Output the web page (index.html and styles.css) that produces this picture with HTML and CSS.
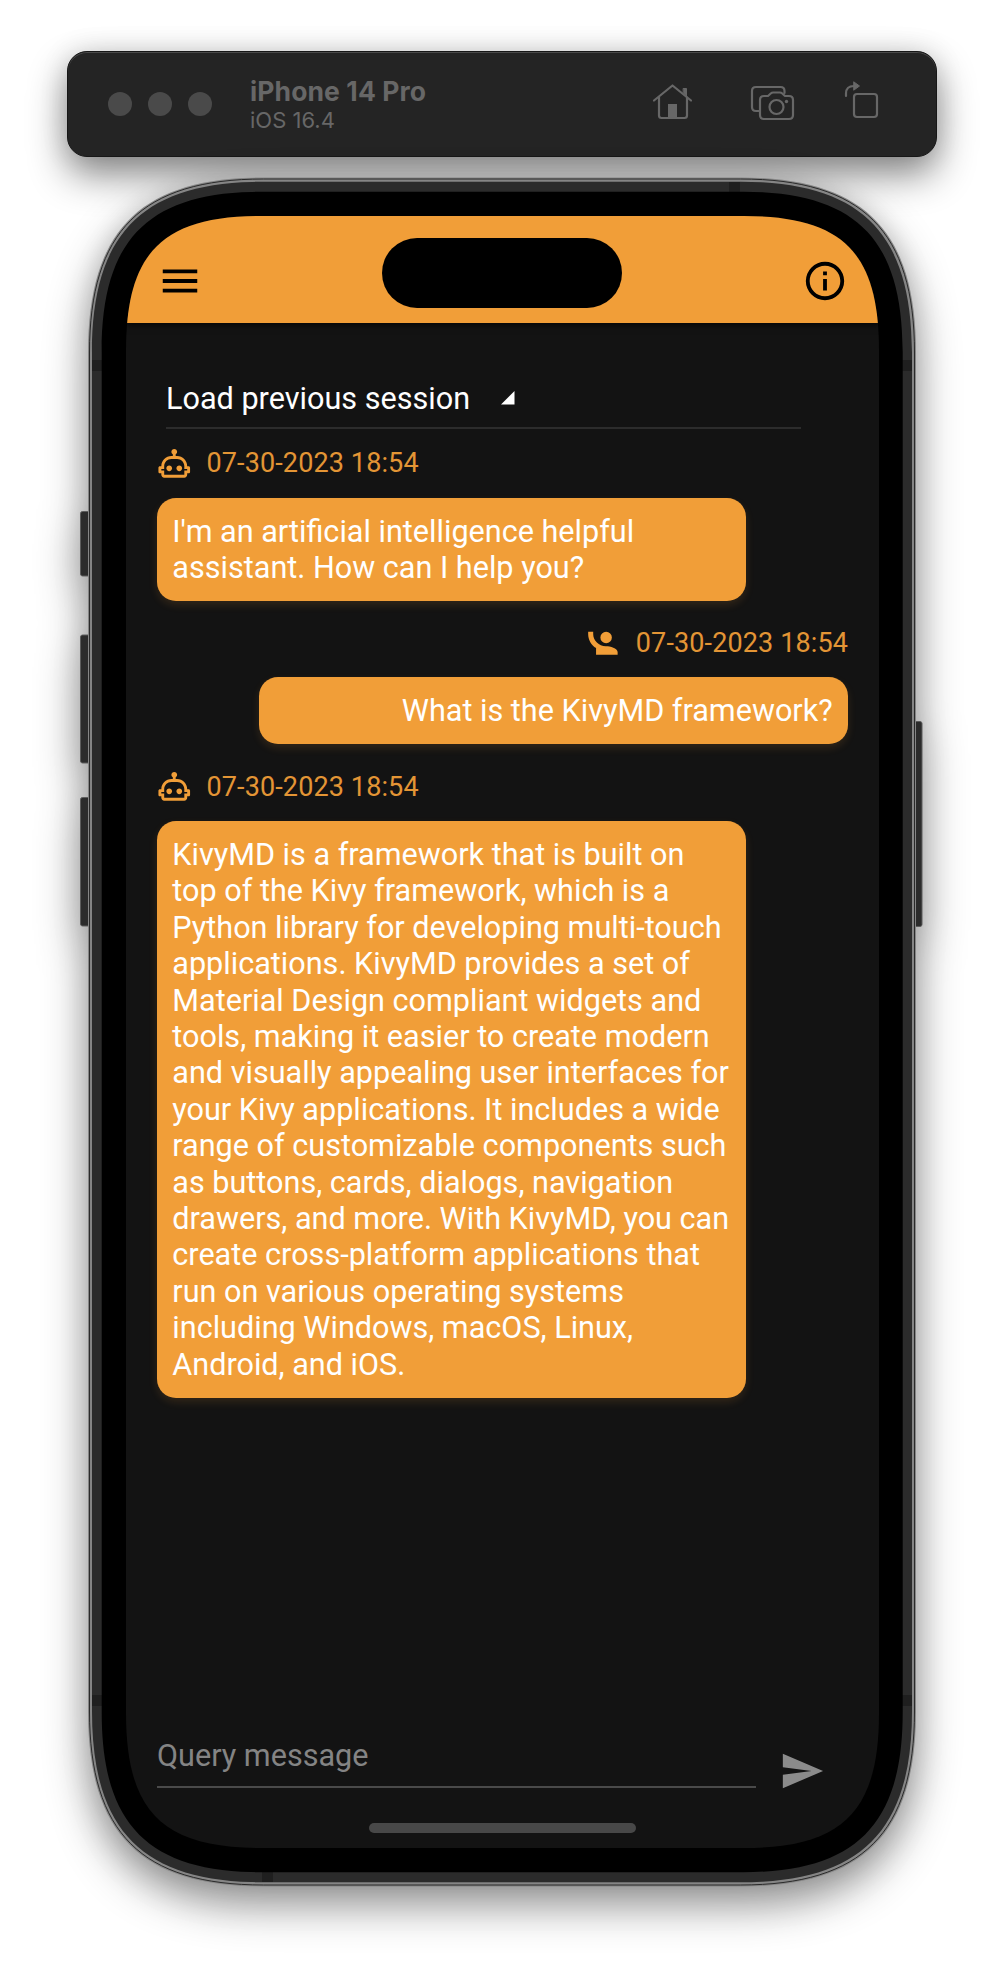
FILE: index.html
```html
<!DOCTYPE html>
<html lang="en">
<head>
<meta charset="utf-8">
<title>iPhone 14 Pro</title>
<link rel="stylesheet" href="styles.css">
</head>
<body>
<div class="toolbar">
  <div class="lights"><i></i><i></i><i></i></div>
  <div class="device">
    <div class="device-name">iPhone 14 Pro</div>
    <div class="device-os">iOS 16.4</div>
  </div>
  <svg class="tools" width="240" height="50" viewBox="640 79 240 50" fill="none" stroke="#676767" stroke-width="2.200" stroke-linejoin="round" stroke-linecap="round">
    <path d="M655 100.500L673.500 85.500L692 100.500M660 97V115.500Q660 118 662.500 118H685.500Q688 118 688 115.500V97"/>
    <path d="M684.500 88.500H687.500V96L684.500 93Z" fill="#676767" stroke-width="1"/>
    <path d="M669 104H678V118H669Z" fill="#676767" stroke="none"/>
    <path d="M760 111H757Q753 111 753 107V91Q753 87 757 87H781.500Q785.500 87 785.500 91V93"/>
    <path d="M765 96H769L772 93.300Q772.800 92.500 774 92.500H781Q782.200 92.500 783 93.300L786 96H790Q794 96 794 100V115Q794 119 790 119H765Q761 119 761 115V100Q761 96 765 96Z"/>
    <circle cx="777.500" cy="107" r="7"/>
    <circle cx="787.500" cy="101.500" r="1.700" fill="#676767" stroke="none"/>
    <rect x="855" y="94" width="23" height="23" rx="3"/>
    <path d="M847 96V93.500Q847 86 855 86"/>
    <path d="M855 82L860.500 86L855 90Z" fill="#676767" stroke-width="1"/>
  </svg>
</div>

<div class="phone">
  <svg class="frame" width="844" height="1710" viewBox="80 177 844 1710">
    <g fill="#2b2b2b" stroke="#5c5c5c">
      <rect x="80.500" y="511.500" width="12" height="64.500" rx="2"/>
      <rect x="80.500" y="635" width="12" height="128" rx="2"/>
      <rect x="80.500" y="797.500" width="12" height="128.500" rx="2"/>
      <rect x="911" y="721.500" width="11" height="205" rx="2"/>
    </g>
    <path fill="#858585" d="M263 177.500h478c122.300 0 175 52.700 175 175v1359c0 122.300-52.700 175-175 175h-478c-122.300 0-175-52.700-175-175v-1359c0-122.300 52.700-175 175-175z"/>
    <path fill="none" stroke="#2a2a2a" d="M263.500 179h477c122 0 174 52 174 174v1358c0 122-52 174-174 174h-477c-122 0-174-52-174-174v-1358c0-122 52-174 174-174z"/>
    <path fill="#2b2b2b" d="M263 181.800h478c120 0 171 51 171 171v1358.500c0 120-51 171-171 171h-478c-120 0-171-51-171-171v-1358.500c0-120 51-171 171-171z"/>
    <g fill="#1f1f1f">
      <rect x="92" y="360" width="11" height="11"/>
      <rect x="901" y="360" width="11" height="11"/>
      <rect x="92" y="1695" width="11" height="11"/>
      <rect x="901" y="1695" width="11" height="11"/>
      <rect x="729" y="182" width="11" height="11"/>
      <rect x="262" y="1871" width="11" height="11"/>
    </g>
    <path fill="#000" d="M261.700 191.800h481c113 0 160 47 160 160v1360.500c0 113-47 160-160 160h-481c-113 0-160-47-160-160v-1360.500c0-113 47-160 160-160z"/>
  </svg>

  <div class="screen">
    <header class="appbar">
      <svg class="icon" viewBox="0 0 24 24"><path d="M3 6H21V8H3V6M3 11H21V13H3V11M3 16H21V18H3V16Z"/></svg>
      <div class="island"></div>
      <svg class="icon" viewBox="0 0 24 24"><path d="M11 9H13V7H11M12 20C7.590 20 4 16.410 4 12S7.590 4 12 4 20 7.590 20 12 16.410 20 12 20M12 2A10 10 0 0 0 2 12A10 10 0 0 0 12 22A10 10 0 0 0 22 12A10 10 0 0 0 12 2M11 17H13V11H11V17Z"/></svg>
    </header>

    <main class="chat">
      <div class="session">
        <span>Load previous session</span>
        <svg width="14" height="14" viewBox="0 0 14 14"><path fill="#fff" d="M0 13.500L13.500 0V13.500Z"/></svg>
      </div>

      <div class="meta">
        <svg class="avatar" viewBox="0 0 24 24"><path d="M17.500 15.500C17.500 16.610 16.610 17.500 15.500 17.500S13.500 16.610 13.500 15.500 14.400 13.500 15.500 13.500 17.500 14.400 17.500 15.500M8.500 13.500C7.400 13.500 6.500 14.400 6.500 15.500S7.400 17.500 8.500 17.500 10.500 16.610 10.500 15.500 9.610 13.500 8.500 13.500M23 15V18C23 18.550 22.550 19 22 19H21V20C21 21.110 20.110 22 19 22H5C3.900 22 3 21.110 3 20V19H2C1.450 19 1 18.550 1 18V15C1 14.450 1.450 14 2 14H3C3 10.130 6.130 7 10 7H11V5.730C10.400 5.390 10 4.740 10 4C10 2.900 10.900 2 12 2S14 2.900 14 4C14 4.740 13.600 5.390 13 5.730V7H14C17.870 7 21 10.130 21 14H22C22.550 14 23 14.450 23 15M21 16H19V14C19 11.240 16.760 9 14 9H10C7.240 9 5 11.240 5 14V16H3V17H5V20H19V17H21V16Z"/></svg>
        <time>07-30-2023 18:54</time>
      </div>
      <div class="bubble">I'm an artificial intelligence helpful<br>assistant. How can I help you?</div>

      <div class="meta sent">
        <svg class="avatar" viewBox="0 0 24 24"><path d="M1.500 4V5.500C1.500 9.650 3.710 13.280 7 15.300V20H22V18C22 15.340 16.670 14 14 14C14 14 13.830 14 13.750 14C9 14 5 10 5 5.500V4M14 4A4 4 0 0 0 10 8A4 4 0 0 0 14 12A4 4 0 0 0 18 8A4 4 0 0 0 14 4Z"/></svg>
        <time>07-30-2023 18:54</time>
      </div>
      <div class="bubble sent">What is the KivyMD framework?</div>

      <div class="meta">
        <svg class="avatar" viewBox="0 0 24 24"><path d="M17.500 15.500C17.500 16.610 16.610 17.500 15.500 17.500S13.500 16.610 13.500 15.500 14.400 13.500 15.500 13.500 17.500 14.400 17.500 15.500M8.500 13.500C7.400 13.500 6.500 14.400 6.500 15.500S7.400 17.500 8.500 17.500 10.500 16.610 10.500 15.500 9.610 13.500 8.500 13.500M23 15V18C23 18.550 22.550 19 22 19H21V20C21 21.110 20.110 22 19 22H5C3.900 22 3 21.110 3 20V19H2C1.450 19 1 18.550 1 18V15C1 14.450 1.450 14 2 14H3C3 10.130 6.130 7 10 7H11V5.730C10.400 5.390 10 4.740 10 4C10 2.900 10.900 2 12 2S14 2.900 14 4C14 4.740 13.600 5.390 13 5.730V7H14C17.870 7 21 10.130 21 14H22C22.550 14 23 14.450 23 15M21 16H19V14C19 11.240 16.760 9 14 9H10C7.240 9 5 11.240 5 14V16H3V17H5V20H19V17H21V16Z"/></svg>
        <time>07-30-2023 18:54</time>
      </div>
      <div class="bubble">KivyMD is a framework that is built on<br>top of the Kivy framework, which is a<br>Python library for developing multi-touch<br>applications. KivyMD provides a set of<br>Material Design compliant widgets and<br>tools, making it easier to create modern<br>and visually appealing user interfaces for<br>your Kivy applications. It includes a wide<br>range of customizable components such<br>as buttons, cards, dialogs, navigation<br>drawers, and more. With KivyMD, you can<br>create cross-platform applications that<br>run on various operating systems<br>including Windows, macOS, Linux,<br>Android, and iOS.</div>
    </main>

    <footer class="composer">
      <div class="field">Query message</div>
      <svg class="icon send" viewBox="0 0 24 24"><path d="M2 21L23 12L2 3V10L17 12L2 14V21Z"/></svg>
    </footer>
    <div class="home"></div>
  </div>
</div>
</body>
</html>
```
FILE: styles.css
```css
* { box-sizing: border-box; }

body {
  margin: 0;
  height: 1972px;
  padding-top: 51px;
  background: #fff;
  overflow: hidden;
}

.toolbar {
  display: flex;
  align-items: center;
  width: 870px;
  height: 106px;
  margin-left: 67px;
  padding: 0 57px 0 40px;
  border: 1px solid #171717;
  border-radius: 20px;
  background: #242424;
  box-shadow: inset 0 1px 0 #4a4a4a, 0 18px 38px rgba(0, 0, 0, .46), 0 0 28px rgba(0, 0, 0, .12);
  font-family: Inter, "Liberation Sans", sans-serif;
  color: #676767;
}

.lights { display: flex; gap: 16px; margin-right: 38px; }
.lights i { width: 24px; height: 24px; border-radius: 50%; background: #4a4a4a; }

.device { white-space: nowrap; }
.device-name { font-size: 26.500px; line-height: 32px; font-weight: 700; letter-spacing: .1px; }
.device-os { font-size: 22px; line-height: 27px; }
.tools { margin-left: auto; }

.phone {
  display: grid;
  width: 844px;
  height: 1710px;
  margin: 20px 0 0 80px;
}

.frame {
  grid-area: 1 / 1;
  overflow: visible;
  filter: drop-shadow(0 18px 22px rgba(0, 0, 0, .42)) drop-shadow(0 0 12px rgba(0, 0, 0, .1));
}

.screen {
  grid-area: 1 / 1;
  display: flex;
  flex-direction: column;
  width: 753px;
  height: 1632px;
  margin: 39px 0 0 46px;
  background: #131313;
  clip-path: path("M135 0h483c98.700 0 135 36.300 135 135v1362c0 98.700-36.300 135-135 135h-483c-98.700 0-135-36.300-135-135v-1362c0-98.700 36.300-135 135-135z");
  font-family: Roboto, "Liberation Sans", sans-serif;
  font-size: 30.600px;
  line-height: 36.400px;
  white-space: nowrap;
}

.icon { width: 46px; height: 46px; flex: none; }

.appbar {
  display: flex;
  align-items: flex-start;
  justify-content: space-between;
  height: 107px;
  flex: none;
  padding: 42px 31px 0 30.500px;
  background: #f19e38;
  box-shadow: 0 2px 7px rgba(0, 0, 0, .8);
}

.island {
  width: 240px;
  height: 70.500px;
  margin-top: -20.500px;
  border-radius: 36px;
  background: #000;
}

.chat { padding: 0 31px; }

.session {
  display: flex;
  align-items: flex-end;
  gap: 30.500px;
  width: 635px;
  height: 105.500px;
  margin-left: 9px;
  padding-bottom: 9px;
  border-bottom: 2px solid #2c2c2c;
  color: #fff;
}
.session svg { margin-bottom: 13px; }

.meta {
  display: flex;
  align-items: center;
  gap: 15px;
  height: 69px;
  color: #f19e38;
  font-size: 27px;
}
.meta.sent { justify-content: flex-end; }
.avatar { width: 34.500px; height: 34.500px; fill: #f19e38; }
.meta time { padding-top: 1px; color: #e39535; letter-spacing: .12px; }

.bubble {
  width: 589px;
  margin-bottom: 7.500px;
  padding: 16px 15.300px 14.600px;
  border-radius: 19px;
  background: #f19e38;
  box-shadow: 0 4px 8px rgba(241, 158, 56, .14);
  color: #fff;
}
.bubble.sent { margin-left: auto; text-align: right; }

.composer {
  display: flex;
  align-items: flex-start;
  justify-content: space-between;
  margin-top: auto;
  padding: 0 54px 0 31px;
}
.field {
  width: 599px;
  height: 52px;
  padding-top: 1.500px;
  border-bottom: 2px solid #4a4a4a;
  color: #848484;
}
.send { margin-top: 12px; fill: #8b8b8b; }

.home {
  width: 267px;
  height: 10px;
  margin: 29px auto 15px;
  border-radius: 5px;
  background: #484848;
}
```
